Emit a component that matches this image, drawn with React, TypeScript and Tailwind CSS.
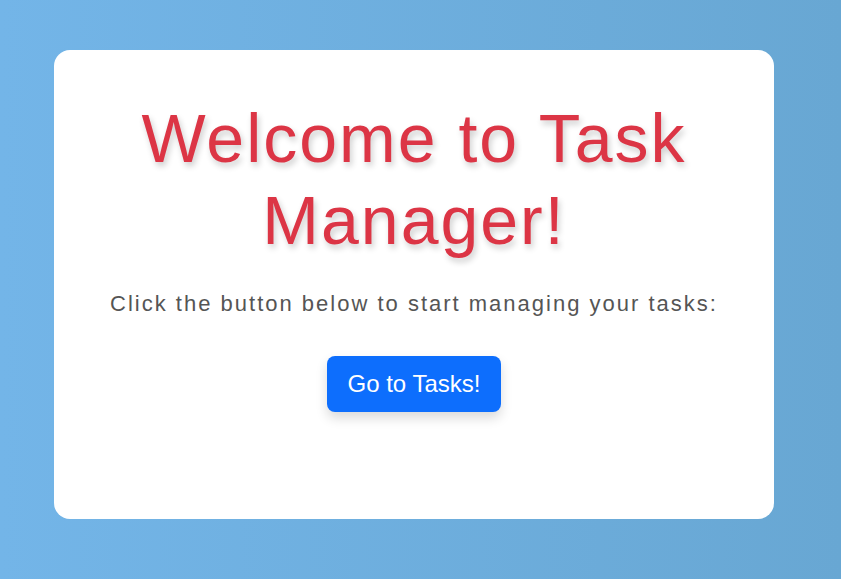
export default function App() {
  return (
    <div className="min-h-screen w-full bg-gradient-to-r from-[#73b5e8] to-[#68a7d3] pt-[50px] pl-[54px] font-['Liberation_Sans',Arial,sans-serif]">
      <div className="w-[720px] h-[469px] bg-white rounded-2xl flex flex-col items-center pt-[48px]">
        <h1 className="text-[68px] leading-[1.2] tracking-[2px] text-[#dc3545] text-center [text-shadow:2px_4px_6px_rgba(0,0,0,0.2)]">
          Welcome to Task
          <br />
          Manager!
        </h1>
        <p className="mt-[26px] text-[22px] tracking-[2px] text-[#555]">
          Click the button below to start managing your tasks:
        </p>
        <button className="mt-[36px] w-[174px] h-[56px] rounded-lg bg-[#0d6efd] text-white text-[24px] shadow-[0_6px_12px_rgba(0,0,0,0.15)]">
          Go to Tasks!
        </button>
      </div>
    </div>
  );
}
